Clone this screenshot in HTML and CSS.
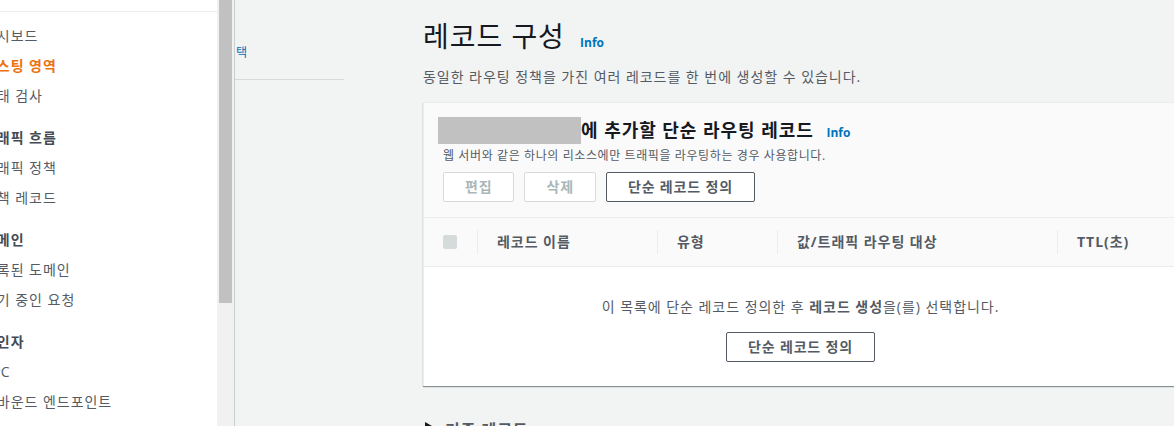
FILE: index.html
```html
<!DOCTYPE html>
<html lang="ko">
<head>
<meta charset="utf-8">
<title>레코드 구성</title>
<link rel="stylesheet" href="styles.css">
</head>
<body>
<div class="app">
  <aside class="sidenav">
    <div class="sidenav-top"></div>
    <div class="nav">
      <ul class="group">
        <li>대시보드</li>
        <li class="active">호스팅 영역</li>
        <li>상태 검사</li>
      </ul>
      <ul class="group">
        <li class="group-title">트래픽 흐름</li>
        <li>트래픽 정책</li>
        <li>정책 레코드</li>
      </ul>
      <ul class="group">
        <li class="group-title">도메인</li>
        <li>등록된 도메인</li>
        <li>대기 중인 요청</li>
      </ul>
      <ul class="group">
        <li class="group-title">확인자</li>
        <li class="latin">VPC</li>
        <li>인바운드 엔드포인트</li>
      </ul>
    </div>
  </aside>
  <div class="scrollbar"><div class="thumb"></div></div>
  <nav class="steps">
    <div class="step">택</div>
  </nav>
  <main class="content">
    <h1 class="page-title">레코드 구성 <a class="info">Info</a></h1>
    <p class="page-desc">동일한 라우팅 정책을 가진 여러 레코드를 한 번에 생성할 수 있습니다.</p>

    <section class="card">
      <header class="card-header">
        <h2 class="card-title"><span class="redacted"></span>에 추가할 단순 라우팅 레코드 <a class="info">Info</a></h2>
        <p class="card-desc">웹 서버와 같은 하나의 리소스에만 트래픽을 라우팅하는 경우 사용합니다.</p>
        <div class="actions">
          <button class="btn" disabled>편집</button>
          <button class="btn" disabled>삭제</button>
          <button class="btn">단순 레코드 정의</button>
        </div>
      </header>
      <div class="table-head">
        <div class="th th-check"><span class="checkbox"></span></div>
        <div class="th"><span>레코드 이름</span></div>
        <div class="th"><span>유형</span></div>
        <div class="th"><span>값/트래픽 라우팅 대상</span></div>
        <div class="th"><span>TTL(초)</span></div>
      </div>
      <div class="empty">
        <p class="empty-text">이 목록에 단순 레코드 정의한 후 <b>레코드 생성</b>을(를) 선택합니다.</p>
        <button class="btn">단순 레코드 정의</button>
      </div>
    </section>

    <div class="expander">
      <svg class="caret" width="7" height="8" viewBox="0 0 7 8"><path d="M0 0 L7 4 L0 8 Z" fill="#16191f"/></svg>
      <span>기존 레코드</span>
    </div>
  </main>
</div>
</body>
</html>
```

FILE: styles.css
```css
html, body {
  margin: 0;
  padding: 0;
  width: 1174px;
  height: 426px;
  overflow: hidden;
  background: #f2f3f3;
  font-family: "Open Sans", "Noto Sans CJK KR", sans-serif;
  color: #16191f;
  letter-spacing: 0.06em;
}

.app {
  display: flex;
  height: 426px;
}

/* side navigation */
.sidenav {
  width: 217px;
  flex: none;
  background: #fff;
  overflow: hidden;
}
.sidenav-top {
  height: 11px;
  border-bottom: 1px solid #eaeded;
}
.nav {
  margin-left: -17px;
  padding-top: 9px;
}
.group {
  list-style: none;
  margin: 0;
  padding: 0;
}
.group + .group {
  margin-top: 12px;
}
.group li {
  height: 30px;
  line-height: 30px;
  font-size: 14px;
  color: #545b64;
  white-space: nowrap;
}
.group li.latin {
  letter-spacing: 0;
  padding-left: 1px;
}
.group li.group-title {
  font-weight: bold;
  color: #444b54;
}
.group li.active {
  color: #ec7211;
  font-weight: bold;
}

/* fake scrollbar */
.scrollbar {
  width: 17px;
  flex: none;
  background: #f1f1f1;
  padding-left: 2px;
  box-sizing: border-box;
}
.thumb {
  width: 13px;
  height: 303px;
  background: #c1c1c1;
}

/* wizard steps */
.steps {
  width: 109px;
  flex: none;
  border-left: 1px solid #c9cece;
}
.step {
  height: 80px;
  box-sizing: border-box;
  padding: 45px 0 0 1px;
  line-height: 16px;
  font-size: 12px;
  color: #0073bb;
  border-bottom: 1px solid #d5dbdb;
}

/* main content */
.content {
  flex: none;
  width: 754px;
  margin-left: 79px;
  padding-top: 18px;
}
.page-title {
  margin: 0;
  font-size: 28px;
  font-weight: 400;
  line-height: 36px;
  color: #16191f;
  white-space: nowrap;
}
.info {
  font-size: 12px;
  font-weight: bold;
  color: #0073bb;
  margin-left: 7px;
  letter-spacing: 0;
}
.page-desc {
  margin: 6px 0 0;
  font-size: 14px;
  line-height: 20px;
  color: #545b64;
}

.card {
  margin-top: 15px;
  background: #fff;
  border-top: 1px solid #eaeded;
  border-left: 1px solid #eaeded;
  box-shadow: 0 1px 1px 0 rgba(0, 28, 36, 0.45);
}
.card-header {
  background: #fafafa;
  padding: 14px 19px 15px;
  border-bottom: 1px solid #eaeded;
}
.card-title {
  margin: 0;
  font-size: 18px;
  font-weight: bold;
  line-height: 27px;
  color: #16191f;
  white-space: nowrap;
}
.redacted {
  display: inline-block;
  vertical-align: top;
  width: 143px;
  height: 27px;
  margin-left: -5px;
  background: #c1c1c1;
}
.card-title .info {
  margin-left: 7px;
}
.card-desc {
  margin: 2px 0 0;
  font-size: 12px;
  line-height: 16px;
  color: #545b64;
  letter-spacing: 0.05em;
}
.actions {
  display: flex;
  gap: 10px;
  margin-top: 8px;
}
.btn {
  height: 30px;
  box-sizing: border-box;
  padding: 0 21px;
  border: 1px solid #545b64;
  border-radius: 2px;
  background: #fff;
  font-family: inherit;
  font-size: 14px;
  font-weight: bold;
  color: #545b64;
  line-height: 28px;
  letter-spacing: 0.06em;
}
.btn:disabled {
  border-color: #d5dbdb;
  color: #aab7b8;
}

.table-head {
  display: grid;
  grid-template-columns: 53px 180px 120px 280px 1fr;
  height: 48px;
  background: #fafafa;
  border-bottom: 1px solid #eaeded;
}
.th {
  display: flex;
  align-items: center;
}
.th > span {
  border-left: 1px solid #eaeded;
  padding-left: 19px;
  line-height: 24px;
  font-size: 14px;
  font-weight: bold;
  color: #545b64;
  white-space: nowrap;
}
.th-check {
  padding-left: 19px;
}
.th > span.checkbox {
  width: 14px;
  height: 14px;
  padding: 0;
  border: 0;
  border-radius: 2px;
  background: #d5dbdb;
}

.empty {
  text-align: center;
  padding: 30px 0 24px;
}
.empty-text {
  margin: 0 0 15px;
  font-size: 14px;
  line-height: 20px;
  color: #545b64;
}
.empty-text b {
  color: #545b64;
}

.expander {
  display: flex;
  align-items: flex-start;
  gap: 13px;
  margin-top: 33px;
  padding-left: 2px;
  font-size: 16px;
  font-weight: bold;
  line-height: 22px;
  color: #545b64;
}
.caret {
  flex: none;
  margin-top: 3px;
}
```
